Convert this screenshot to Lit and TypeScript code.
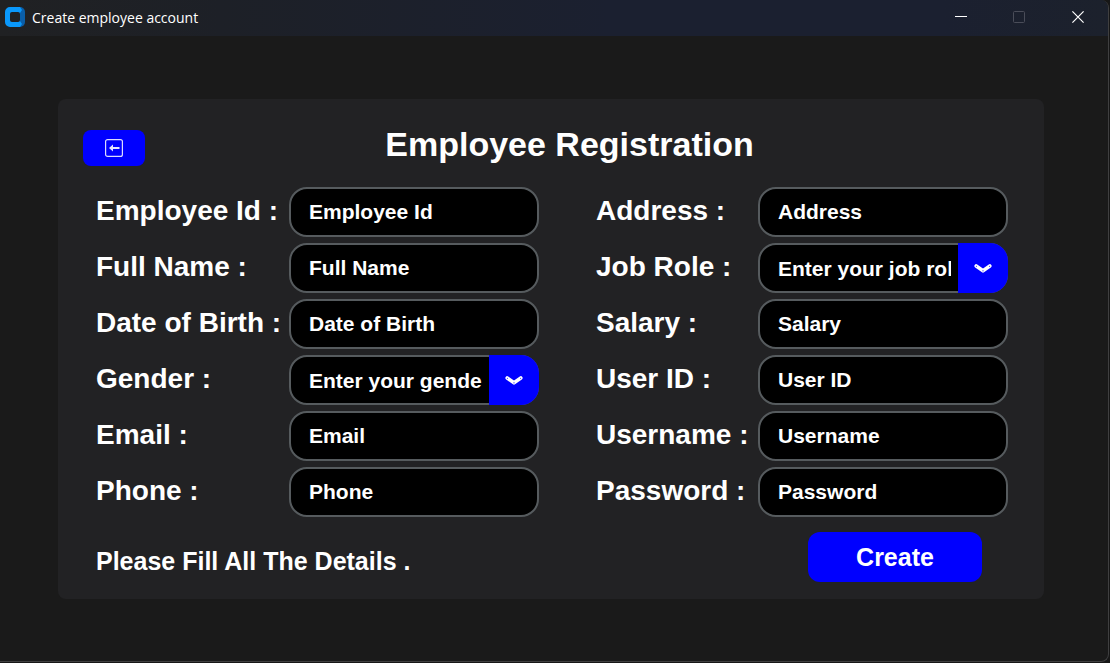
import { LitElement, html, css } from "lit";
import { customElement, property } from "lit/decorators.js";

interface Field {
  id: string;
  label: string;
  placeholder: string;
  type?: string;
  combo?: boolean;
}

const LEFT: Field[] = [
  { id: "employee-id", label: "Employee Id :", placeholder: "Employee Id" },
  { id: "full-name", label: "Full Name :", placeholder: "Full Name" },
  { id: "birth", label: "Date of Birth :", placeholder: "Date of Birth" },
  { id: "gender", label: "Gender :", placeholder: "Enter your gender", combo: true },
  { id: "email", label: "Email :", placeholder: "Email", type: "email" },
  { id: "phone", label: "Phone :", placeholder: "Phone", type: "tel" },
];

const RIGHT: Field[] = [
  { id: "address", label: "Address :", placeholder: "Address" },
  { id: "job-role", label: "Job Role :", placeholder: "Enter your job role", combo: true },
  { id: "salary", label: "Salary :", placeholder: "Salary" },
  { id: "user-id", label: "User ID :", placeholder: "User ID" },
  { id: "username", label: "Username :", placeholder: "Username" },
  { id: "password", label: "Password :", placeholder: "Password", type: "password" },
];

@customElement("title-bar")
class TitleBar extends LitElement {
  static styles = css`
    :host {
      display: flex;
      align-items: center;
      box-sizing: border-box;
      height: 36px;
      padding: 0 0 2px 4px;
      background: linear-gradient(90deg, #202123 0%, #1d2027 20%, #1b2030 55%, #1b2030 85%, #1c212c 100%);
      color: #fff;
      font: 14px/20px "Open Sans", "Noto Sans", sans-serif;
    }
    .logo { flex: none; margin-right: 7px; }
    .name { flex: 1; padding-top: 2px; }
    .control {
      display: grid;
      place-items: center;
      width: 58px;
      height: 34px;
      padding: 0;
      border: 0;
      background: none;
      color: #fff;
    }
    .control:disabled { color: #4a4d59; }
    .close { width: 60px; }
  `;

  render() {
    return html`
      <svg class="logo" width="21" height="22" viewBox="0 0 21 22" aria-hidden="true">
        <rect x="6" y="1" width="15" height="20" rx="5" fill="#0a5ea8" />
        <path d="M6 1h10l2 3-2 3v8l2 3-2 3H6a5 5 0 0 1-5-5V6a5 5 0 0 1 5-5z" fill="#0a98fb" />
        <rect x="6" y="6" width="10" height="10" rx="2" fill="#202123" />
      </svg>
      <span class="name">Create employee account</span>
      <button class="control" aria-label="Minimize">
        <svg width="12" height="12"><path d="M0 5.5h12" stroke="currentColor" /></svg>
      </button>
      <button class="control" aria-label="Maximize" disabled>
        <svg width="12" height="12"><rect x=".5" y=".5" width="11" height="11" rx="1" fill="none" stroke="currentColor" /></svg>
      </button>
      <button class="control close" aria-label="Close">
        <svg width="12" height="12"><path d="M.4.4l11.2 11.2M11.6.4L.4 11.6" stroke="currentColor" stroke-width="1.2" /></svg>
      </button>
    `;
  }
}

@customElement("field-column")
class FieldColumn extends LitElement {
  @property({ attribute: false }) fields: Field[] = [];

  static styles = css`
    :host {
      display: grid;
      grid-template-columns: var(--label-width) minmax(0, 1fr);
      row-gap: 6px;
      align-items: center;
      color: #fff;
      font-family: "Liberation Sans", Arial, sans-serif;
      font-weight: bold;
    }
    label {
      padding-bottom: 2px;
      font-size: 28px;
      line-height: 32px;
      white-space: nowrap;
    }
    .box {
      box-sizing: border-box;
      width: 100%;
      height: 50px;
      margin: 0;
      padding: 0 18px;
      border: 2px solid #565b5e;
      border-radius: 18px;
      outline: none;
      background: #000;
      color: #fff;
      font: inherit;
      font-size: 21px;
    }
    .box::placeholder { color: #fff; opacity: 1; }
    .combo { display: grid; }
    .combo > * { grid-area: 1 / 1; }
    select.box {
      appearance: none;
      padding-right: 55px;
      text-overflow: clip;
    }
    .arrow {
      display: grid;
      place-items: center;
      justify-self: end;
      box-sizing: border-box;
      width: 50px;
      height: 50px;
      padding-top: 2px;
      border-radius: 0 18px 18px 0;
      background: #00f;
      pointer-events: none;
    }
  `;

  private control(f: Field) {
    if (!f.combo) {
      return html`<input class="box" id=${f.id} type=${f.type ?? "text"} placeholder=${f.placeholder} />`;
    }
    return html`
      <div class="combo">
        <select class="box" id=${f.id}>
          <option>${f.placeholder}</option>
        </select>
        <span class="arrow">
          <svg width="18" height="12" viewBox="0 0 18 12" aria-hidden="true">
            <path d="M2.2 3L9 7.8 15.8 3" fill="none" stroke="#fff" stroke-width="3.6" stroke-linecap="round" stroke-linejoin="round" />
            <g fill="#00f"><circle cx="2.4" cy="3.2" r=".5" /><circle cx="9" cy="7.8" r=".6" /><circle cx="15.6" cy="3.2" r=".5" /></g>
          </svg>
        </span>
      </div>
    `;
  }

  render() {
    return this.fields.map((f) => html`<label for=${f.id}>${f.label}</label>${this.control(f)}`);
  }
}

@customElement("app-root")
class AppRoot extends LitElement {
  static styles = css`
    :host {
      display: flex;
      box-sizing: border-box;
      min-height: 100vh;
      padding: 0 1px 1px 0;
      background: #171717;
      color: #fff;
      font-family: "Liberation Sans", Arial, sans-serif;
      font-weight: bold;
    }
    .window {
      flex: 1;
      min-width: 0;
      overflow: hidden;
      border: solid #3f3f40;
      border-width: 0 1px 1px 0;
      border-radius: 0 8px 8px 0;
      background: #1a1a1a;
    }
    .body { padding: 63px 64px 62px 58px; }
    .panel {
      padding: 24px 36px 17px;
      border-radius: 8px;
      background: #222224;
    }
    .head {
      display: flex;
      align-items: flex-start;
      margin: 0 14px 21px -11px;
    }
    .back, .create {
      display: grid;
      place-items: center;
      padding: 0;
      border: 0;
      background: #00f;
      color: #fff;
      cursor: pointer;
    }
    .back {
      width: 62px;
      height: 36px;
      margin-top: 7px;
      border-radius: 8px;
    }
    h1 {
      flex: 1;
      margin: 0;
      font-size: 34px;
      line-height: 42px;
      text-align: center;
    }
    .columns {
      display: grid;
      grid-template-columns: minmax(0, 443fr) minmax(0, 412fr);
      column-gap: 57px;
      padding-left: 2px;
    }
    .left { --label-width: 193px; }
    .right { --label-width: 162px; }
    .foot {
      display: flex;
      align-items: center;
      justify-content: space-between;
      margin-top: 15px;
      padding: 0 26px 0 2px;
    }
    .note { margin: 0; padding-top: 8px; font-size: 25px; line-height: 30px; }
    .create {
      width: 174px;
      height: 50px;
      border-radius: 12px;
      font: inherit;
      font-size: 25px;
    }
  `;

  render() {
    return html`
      <div class="window">
        <title-bar></title-bar>
        <main class="body">
          <form class="panel" @submit=${(e: Event) => e.preventDefault()}>
            <header class="head">
              <button class="back" type="button" aria-label="Back">
                <svg width="18" height="18" viewBox="0 0 18 18" aria-hidden="true">
                  <rect x=".6" y=".6" width="16.8" height="16.8" rx="2" fill="none" stroke="#dcdcff" stroke-width="1.2" />
                  <path d="M4 9l4-3.6v2.5h6.500v2.200H8v2.500z" fill="#e4e4ff" />
                </svg>
              </button>
              <h1>Employee Registration</h1>
            </header>
            <div class="columns">
              <field-column class="left" .fields=${LEFT}></field-column>
              <field-column class="right" .fields=${RIGHT}></field-column>
            </div>
            <footer class="foot">
              <p class="note">Please Fill All The Details .</p>
              <button class="create" type="submit">Create</button>
            </footer>
          </form>
        </main>
      </div>
    `;
  }
}
